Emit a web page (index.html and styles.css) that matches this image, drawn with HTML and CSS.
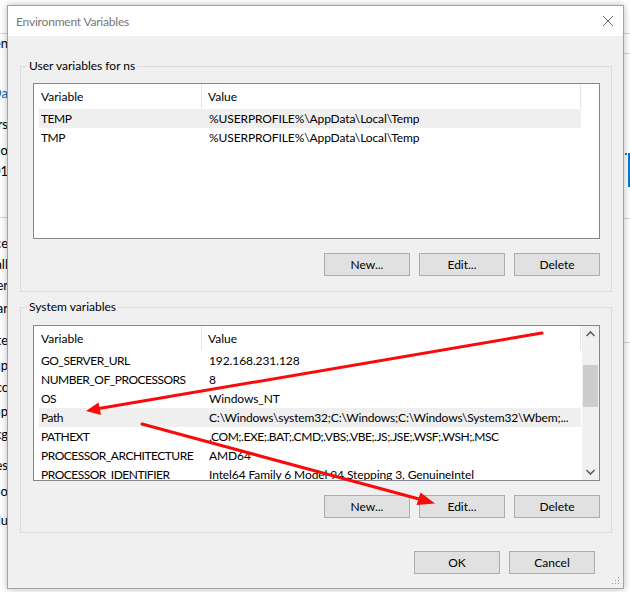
FILE: index.html
```html
<!DOCTYPE html>
<html lang="en">
<head>
<meta charset="utf-8">
<title>Environment Variables</title>
<link rel="stylesheet" href="styles.css">
</head>
<body>
<div class="desktop">
  <div class="bgwin">
    <div class="bg-left">
      <span>Open</span>
      <span class="link">AppDa</span>
      <span>vars</span>
      <span>Windo</span>
      <span>201</span>
      <span>ice</span>
      <span>Install</span>
      <span>User</span>
      <span>Var</span>
      <span>te</span>
      <span>Snp</span>
      <span>Acc</span>
      <span>Tmp</span>
      <span>Pkg</span>
      <span>Files</span>
      <span>Windo</span>
      <span>Valu</span>
    </div>
    <div class="bg-rule bg-rule-a"></div>
    <div class="bg-rule bg-rule-b"></div>
    <div class="bg-rule-r bg-rule-c"></div>
    <div class="bg-rule-r bg-rule-d"></div>
    <div class="bg-rule-r bg-rule-e"></div>
    <div class="bg-rule-r bg-rule-f"></div>
    <div class="bg-blue-dot"></div>
    <div class="bg-blue-bar"></div>
  </div>

  <div class="dialog">
    <div class="titlebar">
      <span class="title">Environment Variables</span>
      <svg class="close" width="12" height="12" viewBox="0 0 12 12"><path d="M1 1 L11 11 M11 1 L1 11" stroke="#6f6f6f" stroke-width="1" fill="none"/></svg>
    </div>
    <div class="content">
      <fieldset class="group user">
        <legend>User variables for ns</legend>
        <div class="listbox">
          <div class="listmain">
            <div class="lhead"><div class="hc1">Variable</div><div class="hc2">Value</div></div>
            <div class="rows">
              <div class="row sel"><div class="c1">TEMP</div><div class="c2">%USERPROFILE%\AppData\Local\Temp</div></div>
              <div class="row"><div class="c1">TMP</div><div class="c2">%USERPROFILE%\AppData\Local\Temp</div></div>
            </div>
          </div>
        </div>
        <div class="btnrow">
          <button class="btn">New...</button>
          <button class="btn">Edit...</button>
          <button class="btn">Delete</button>
        </div>
      </fieldset>

      <fieldset class="group sys">
        <legend>System variables</legend>
        <div class="listbox">
          <div class="listmain">
            <div class="lhead"><div class="hc1">Variable</div><div class="hc2">Value</div></div>
            <div class="rows">
              <div class="row"><div class="c1">GO_SERVER_URL</div><div class="c2">192.168.231.128</div></div>
              <div class="row"><div class="c1">NUMBER_OF_PROCESSORS</div><div class="c2">8</div></div>
              <div class="row"><div class="c1">OS</div><div class="c2">Windows_NT</div></div>
              <div class="row sel"><div class="c1">Path</div><div class="c2 tight">C:\Windows\system32;C:\Windows;C:\Windows\System32\Wbem;...</div></div>
              <div class="row"><div class="c1">PATHEXT</div><div class="c2 caps">.COM;.EXE;.BAT;.CMD;.VBS;.VBE;.JS;.JSE;.WSF;.WSH;.MSC</div></div>
              <div class="row"><div class="c1">PROCESSOR_ARCHITECTURE</div><div class="c2">AMD64</div></div>
              <div class="row"><div class="c1">PROCESSOR_IDENTIFIER</div><div class="c2">Intel64 Family 6 Model 94 Stepping 3, GenuineIntel</div></div>
            </div>
          </div>
          <div class="scrollbar">
            <svg class="sb-arrow" width="17" height="17" viewBox="0 0 17 17"><path d="M4.5 10 L8.5 6 L12.5 10" stroke="#606060" stroke-width="1.6" fill="none"/></svg>
            <div class="sb-track"><div class="sb-thumb"></div></div>
            <svg class="sb-arrow" width="17" height="17" viewBox="0 0 17 17"><path d="M4.5 7 L8.5 11 L12.5 7" stroke="#606060" stroke-width="1.6" fill="none"/></svg>
          </div>
        </div>
        <div class="btnrow">
          <button class="btn">New...</button>
          <button class="btn">Edit...</button>
          <button class="btn">Delete</button>
        </div>
      </fieldset>

      <div class="footer">
        <button class="btn">OK</button>
        <button class="btn">Cancel</button>
      </div>
    </div>
    <svg class="grip" width="8" height="8" viewBox="0 0 8 8">
      <rect x="6" y="0" width="1" height="1" fill="#9a9a9a"/>
      <rect x="3" y="3" width="1" height="1" fill="#9a9a9a"/>
      <rect x="6" y="3" width="1" height="1" fill="#9a9a9a"/>
      <rect x="0" y="6" width="1" height="1" fill="#9a9a9a"/>
      <rect x="3" y="6" width="1" height="1" fill="#9a9a9a"/>
      <rect x="6" y="6" width="1" height="1" fill="#9a9a9a"/>
    </svg>
  </div>

  <svg class="arrows" width="630" height="592" viewBox="0 0 630 592">
    <line x1="542" y1="333" x2="99" y2="408.6" stroke="#fa0a0a" stroke-width="3" stroke-linecap="round"/>
    <polygon points="86,411 101,415 98.5,402.5" fill="#fa0a0a"/>
    <line x1="142" y1="424" x2="419" y2="499" stroke="#fa0a0a" stroke-width="3" stroke-linecap="round"/>
    <polygon points="435,503.5 416.5,505 420.5,492.5" fill="#fa0a0a"/>
  </svg>
</div>
</body>
</html>
```

FILE: styles.css
```css
* { box-sizing: border-box; }

html, body {
  margin: 0;
  padding: 0;
}

body {
  font-family: Lato, "Liberation Sans", sans-serif;
  font-size: 12px;
  color: #000;
  background: #fff;
}

.desktop {
  position: relative;
  width: 630px;
  height: 592px;
  overflow: hidden;
  background: #fff;
}

/* window behind the dialog */
.bgwin {
  position: absolute;
  inset: 0;
  background: #fff;
}

.bg-left {
  position: absolute;
  left: 0;
  top: 35px;
  width: 8px;
  display: flex;
  flex-direction: column;
  align-items: flex-end;
}

.bg-left span {
  display: block;
  height: 16px;
  line-height: 16px;
  white-space: nowrap;
  font-size: 13px;
}

.bg-left .link { color: #1a5fb4; }

.bg-left span:nth-child(2) { margin-top: 34px; }
.bg-left span:nth-child(3) { margin-top: 15px; }
.bg-left span:nth-child(4) { margin-top: 10px; }
.bg-left span:nth-child(5) { margin-top: 5px; }
.bg-left span:nth-child(6) { margin-top: 56px; }
.bg-left span:nth-child(7) { margin-top: 5px; }
.bg-left span:nth-child(8) { margin-top: 5px; }
.bg-left span:nth-child(9) { margin-top: 7px; }
.bg-left span:nth-child(10) { margin-top: 16px; }
.bg-left span:nth-child(11) { margin-top: 9px; }
.bg-left span:nth-child(12) { margin-top: 6px; }
.bg-left span:nth-child(13) { margin-top: 8px; }
.bg-left span:nth-child(14) { margin-top: 7px; }
.bg-left span:nth-child(15) { margin-top: 15px; }
.bg-left span:nth-child(16) { margin-top: 10px; }
.bg-left span:nth-child(17) { margin-top: 13px; }

.bg-rule, .bg-rule-r {
  position: absolute;
  height: 1px;
  background: #d6d6d6;
  width: 10px;
}
.bg-rule { left: 0; }
.bg-rule-r { right: 0; }
.bg-rule-a { top: 33px; }
.bg-rule-b { top: 217px; }
.bg-rule-c { top: 33px; }
.bg-rule-d { top: 53px; }
.bg-rule-e { top: 218px; }
.bg-rule-f { top: 342px; }

.bg-blue-dot {
  position: absolute;
  left: 625px;
  top: 153px;
  width: 2px;
  height: 2px;
  background: #0078d7;
}
.bg-blue-bar {
  position: absolute;
  left: 628px;
  top: 153px;
  width: 2px;
  height: 34px;
  background: #0078d7;
}

/* dialog */
.dialog {
  position: absolute;
  left: 7px;
  top: 5px;
  width: 617px;
  height: 584px;
  border: 1px solid #a3a3a3;
  background: #f0f0f0;
  box-shadow: 0 0 7px rgba(0, 0, 0, 0.28);
  display: flex;
  flex-direction: column;
}

.titlebar {
  height: 30px;
  flex: none;
  background: #fff;
  display: flex;
  align-items: center;
  justify-content: space-between;
  padding: 0 9px 0 8px;
}

.title {
  color: #777;
  font-size: 12px;
  letter-spacing: -0.2px;
}

.close { display: block; }

.content {
  padding: 22px 11px 0 12px;
  display: flex;
  flex-direction: column;
}

.group {
  margin: 0;
  min-width: 0;
  border: 1px solid #dcdcdc;
  padding: 0 11px 15px 12px;
}

.group.sys {
  margin-top: 7px;
  padding-bottom: 14px;
}

.group legend {
  padding: 0 2px;
  margin-left: -6px;
  height: 16px;
  line-height: 16px;
}

.listbox {
  margin-top: 9px;
  height: 156px;
  border: 1px solid #828790;
  background: #fff;
  display: flex;
  overflow: hidden;
}

.sys .listbox { margin-top: 10px; }

.listmain {
  flex: 1;
  min-width: 0;
  overflow: hidden;
}

.lhead {
  display: flex;
  height: 25px;
}

.hc1, .hc2 {
  height: 24px;
  line-height: 25px;
  border-right: 1px solid #e5e5e5;
  white-space: nowrap;
}

.hc1 {
  width: 168px;
  padding-left: 7px;
}

.hc2 {
  width: 379px;
  padding-left: 6px;
}

.rows {
  margin-left: 5px;
  width: 542px;
}

.row {
  display: flex;
  height: 19px;
  line-height: 19px;
}

.row.sel { background: #efefef; }

.c1 {
  width: 163px;
  flex: none;
  padding-left: 2px;
  white-space: nowrap;
  overflow: hidden;
  letter-spacing: -0.5px;
}

.c2 {
  flex: 1;
  min-width: 0;
  padding-left: 7px;
  padding-right: 6px;
  white-space: nowrap;
  overflow: hidden;
  text-overflow: ellipsis;
  letter-spacing: -0.1px;
}

.c2.tight { letter-spacing: -0.15px; }
.c2.caps { letter-spacing: -0.45px; }

.scrollbar {
  width: 17px;
  flex: none;
  display: flex;
  flex-direction: column;
  background: #f0f0f0;
}

.sb-arrow { display: block; flex: none; }

.sb-track {
  flex: 1;
  padding: 22px 1px 0 1px;
}

.sb-thumb {
  height: 42px;
  background: #cdcdcd;
}

.btnrow {
  display: flex;
  justify-content: flex-end;
  gap: 9px;
  margin-top: 14px;
}

.btn {
  width: 86px;
  height: 23px;
  margin: 0;
  padding: 0;
  background: #e1e1e1;
  border: 1px solid #adadad;
  border-radius: 0;
  font: inherit;
  line-height: 21px;
  color: #000;
}

.footer {
  display: flex;
  justify-content: flex-end;
  gap: 9px;
  margin-top: 18px;
  margin-right: 17px;
}

.grip {
  position: absolute;
  right: 3px;
  bottom: 3px;
}

.arrows {
  position: absolute;
  left: 0;
  top: 0;
  pointer-events: none;
}
```
